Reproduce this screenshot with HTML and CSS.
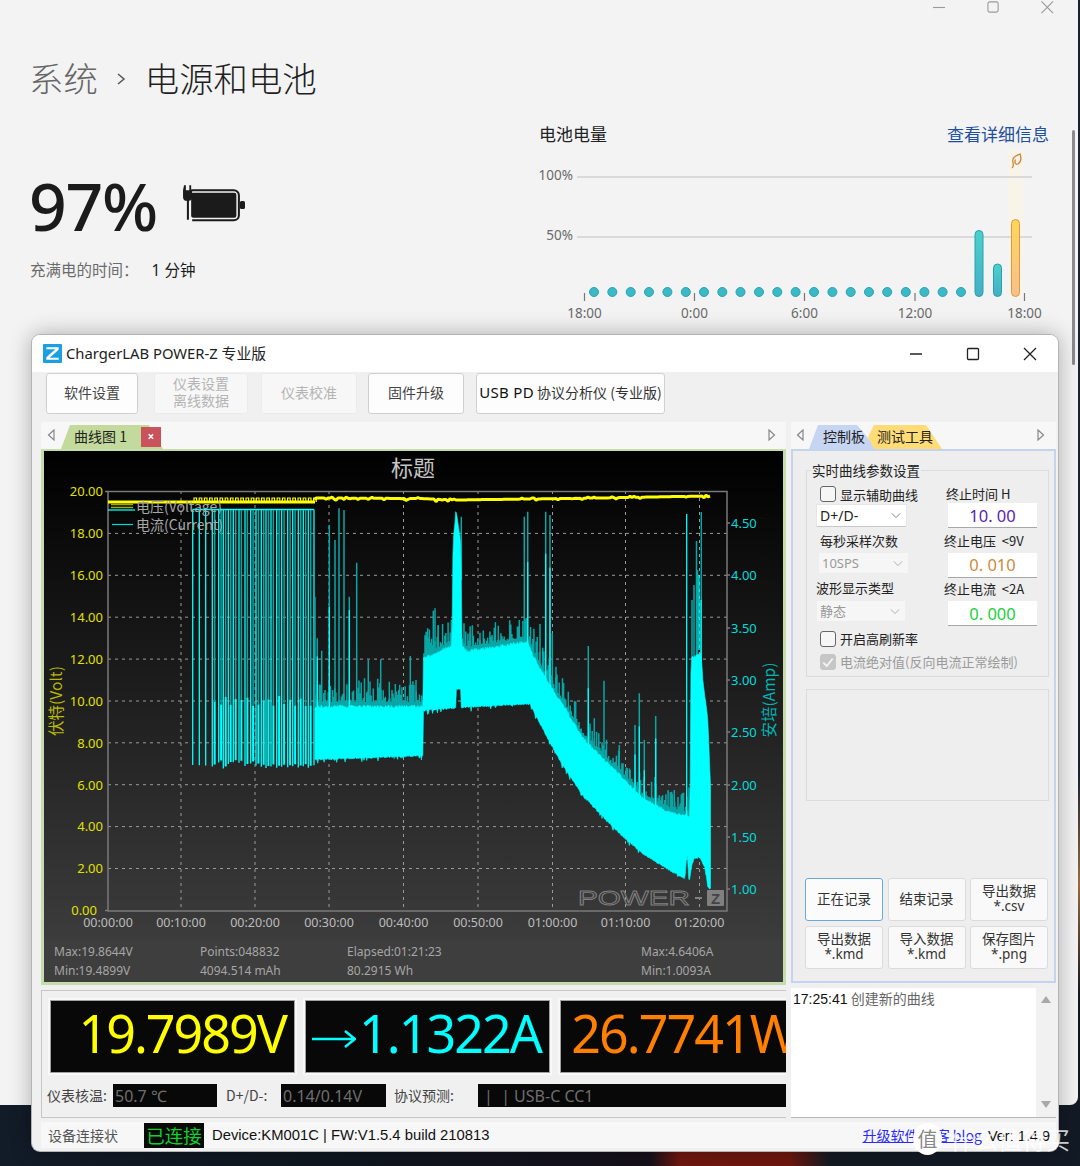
FILE: index.html
```html
<!DOCTYPE html>
<html lang="zh-CN">
<head>
<meta charset="utf-8">
<title>电源和电池</title>
<link rel="stylesheet" href="styles.css">
</head>
<body>
<div class="desktop">
  <main class="settings">
    <div class="caption">
      <svg class="cap-icon" viewBox="0 0 14 14"><path d="M0 7H13"/></svg>
      <svg class="cap-icon" viewBox="0 0 14 14"><rect x="1" y="1" width="11" height="11" rx="2"/></svg>
      <svg class="cap-icon" viewBox="0 0 14 14"><path d="M0.5 0.5L13 13M13 0.5L0.5 13"/></svg>
    </div>
    <h1 class="crumb"><span class="crumb-parent">系统</span><svg class="crumb-sep" viewBox="0 0 10 14"><path d="M2 2L8 7L2 12"/></svg><span>电源和电池</span></h1>
    <div class="power-grid">
      <section class="power-left">
        <div class="level">
          <span class="percent">97%</span>
          <svg class="batt" viewBox="0 0 64 44">
            <path class="batt-fill" d="M3 2.500h1.800v5h3.400v-5h1.800v5h1v6.500a4 4 0 0 1-3.200 3.900v18.600h-2v-18.600a4 4 0 0 1-3.800-3.900v-6.500z"/>
            <path class="batt-line" d="M10 7.500H52a5 5 0 0 1 5 5V32a5 5 0 0 1-5 5H11"/>
            <rect class="batt-fill" x="10" y="10" width="44.500" height="24.500" rx="2"/>
            <rect class="batt-fill" x="58" y="18" width="5" height="8" rx="1.500"/>
          </svg>
        </div>
        <p class="eta"><span class="eta-label">充满电的时间：</span><span>1 分钟</span></p>
      </section>
      <section class="power-right">
        <div class="chart-head"><span class="chart-title">电池电量</span><a class="chart-link">查看详细信息</a></div>
        <svg class="batt-chart" viewBox="538 148 511 177">
          <defs>
            <linearGradient id="tealBar" x1="0" y1="0" x2="0" y2="1"><stop offset="0" stop-color="#4ad2cc"/><stop offset="1" stop-color="#45aec4"/></linearGradient>
            <linearGradient id="amberBar" x1="0" y1="0" x2="0" y2="1"><stop offset="0" stop-color="#ffd558"/><stop offset="1" stop-color="#f8c08a"/></linearGradient>
          </defs>
          <rect class="bc-highlight" x="1008" y="150" width="15" height="148"/>
          <line class="bc-grid" x1="577" y1="177" x2="1032" y2="177"/>
          <line class="bc-grid" x1="577" y1="237" x2="1032" y2="237"/>
          <text class="bc-label bc-end" x="573" y="180">100%</text>
          <text class="bc-label bc-end" x="573" y="240">50%</text>
          <g class="bc-dots">
            <circle cx="594" cy="292" r="4.500"/><circle cx="612.300" cy="292" r="4.500"/><circle cx="630.700" cy="292" r="4.500"/><circle cx="649" cy="292" r="4.500"/><circle cx="667.400" cy="292" r="4.500"/><circle cx="685.800" cy="292" r="4.500"/><circle cx="704" cy="292" r="4.500"/><circle cx="722.300" cy="292" r="4.500"/><circle cx="740.500" cy="292" r="4.500"/><circle cx="759" cy="292" r="4.500"/><circle cx="777.300" cy="292" r="4.500"/><circle cx="795.600" cy="292" r="4.500"/><circle cx="814" cy="292" r="4.500"/><circle cx="832.400" cy="292" r="4.500"/><circle cx="850.700" cy="292" r="4.500"/><circle cx="869" cy="292" r="4.500"/><circle cx="887.200" cy="292" r="4.500"/><circle cx="905.800" cy="292" r="4.500"/><circle cx="924.400" cy="292" r="4.500"/><circle cx="942.600" cy="292" r="4.500"/><circle cx="961" cy="292" r="4.500"/>
          </g>
          <rect class="bc-bar-teal" x="975" y="230.500" width="8" height="66" rx="4"/>
          <rect class="bc-bar-teal" x="993.500" y="264" width="8" height="32.500" rx="4"/>
          <rect class="bc-bar-amber" x="1011.500" y="219.500" width="8" height="77" rx="4"/>
          <path class="bc-leaf" d="M1012 168C1015 166 1012 162 1013 159C1014 156 1018 155 1020 154C1021.500 158 1021 162 1018 164C1016 165 1014 163 1015.500 159.500"/>
          <path class="bc-tick" d="M584.500 293v8M694.500 293v8M804.500 293v8M915 293v8M1024.500 293v8"/>
          <text class="bc-label bc-mid" x="584.500" y="318">18:00</text>
          <text class="bc-label bc-mid" x="694.500" y="318">0:00</text>
          <text class="bc-label bc-mid" x="804.500" y="318">6:00</text>
          <text class="bc-label bc-mid" x="915" y="318">12:00</text>
          <text class="bc-label bc-mid" x="1024.500" y="318">18:00</text>
        </svg>
      </section>
    </div>
  </main>
  <div class="page-scroll"></div>

  <div class="win">
    <header class="titlebar">
      <svg class="app-logo" viewBox="0 0 20 20"><rect width="20" height="20" rx="1" class="logo-bg"/><path class="logo-z" d="M3.500 3.500H16.500V6L7 14.500H16.500V16.500H3.500V14L13 5.500H3.500Z"/></svg>
      <span class="app-title">ChargerLAB POWER-Z 专业版</span>
      <div class="win-ctrls">
        <svg class="win-ctrl" viewBox="0 0 14 14"><path d="M1 7H13"/></svg>
        <svg class="win-ctrl" viewBox="0 0 14 14"><rect x="1.500" y="1.500" width="11" height="11" rx="1"/></svg>
        <svg class="win-ctrl" viewBox="0 0 14 14"><path d="M1 1L13 13M13 1L1 13"/></svg>
      </div>
    </header>
    <nav class="toolbar">
      <button class="tbtn tb1">软件设置</button>
      <button class="tbtn tb2" disabled>仪表设置<br>离线数据</button>
      <button class="tbtn tb3" disabled>仪表校准</button>
      <button class="tbtn tb4">固件升级</button>
      <button class="tbtn tb5"><span class="lat">USB PD</span> 协议分析仪 (专业版)</button>
    </nav>
    <div class="work">
      <div class="col-left">
        <div class="tabrow">
          <svg class="arrow" viewBox="0 0 8 12"><path d="M7 1L1.500 6L7 11Z"/></svg>
          <div class="tab-green-wrap">
            <span class="tab tab-green">曲线图 1</span>
            <span class="tab-close">×</span>
          </div>
          <svg class="arrow arrow-end" viewBox="0 0 8 12"><path d="M1 1L6.500 6L1 11Z"/></svg>
        </div>
        <div class="chartbox">
          <svg class="plot" viewBox="44 451 739 489">
            <defs>
              <linearGradient id="plotBg" x1="0" y1="0" x2="0" y2="1"><stop offset="0" stop-color="#000"/><stop offset="1" stop-color="#3c3c3c"/></linearGradient>
            </defs>
            <rect x="44" y="451" width="739" height="489" fill="url(#plotBg)"/>
            <text class="p-title" x="413" y="476">标题</text>
            <path class="p-grid" d="M108 533.400H727M108 575.300H727M108 617.200H727M108 659.100H727M108 701H727M108 742.800H727M108 784.700H727M108 826.600H727M108 868.500H727M181 491V911M255 491V911M329 491V911M403.500 491V911M478 491V911M552.500 491V911M625.500 491V911M699.500 491V911"/>
            <rect class="p-axis" x="108" y="491.500" width="619" height="419.500"/>
            <path class="p-axis" d="M727 523h3M727 575h3M727 628h3M727 680h3M727 732h3M727 785h3M727 837h3M727 889h3M105 491.500h3M105 910.500h3"/>
            <g class="p-lv">
              <text x="103" y="496">20.00</text><text x="103" y="538">18.00</text><text x="103" y="580">16.00</text><text x="103" y="622">14.00</text><text x="103" y="664">12.00</text><text x="103" y="706">10.00</text><text x="103" y="748">8.00</text><text x="103" y="790">6.00</text><text x="103" y="831">4.00</text><text x="103" y="873">2.00</text><text x="97" y="915">0.00</text>
            </g>
            <g class="p-la">
              <text x="731" y="528">4.50</text><text x="731" y="580">4.00</text><text x="731" y="633">3.50</text><text x="731" y="685">3.00</text><text x="731" y="737">2.50</text><text x="731" y="790">2.00</text><text x="731" y="842">1.50</text><text x="731" y="894">1.00</text>
            </g>
            <g class="p-lx">
              <text x="108" y="927">00:00:00</text><text x="181" y="927">00:10:00</text><text x="255" y="927">00:20:00</text><text x="329" y="927">00:30:00</text><text x="403.500" y="927">00:40:00</text><text x="478" y="927">00:50:00</text><text x="552.500" y="927">01:00:00</text><text x="625.500" y="927">01:10:00</text><text x="699.500" y="927">01:20:00</text>
            </g>
            <text class="p-ylab-v" transform="translate(62 701) rotate(-90)">伏特(Volt)</text>
            <text class="p-ylab-a" transform="translate(775 700) rotate(-90)">安培(Amp)</text>
            <g id="plotData"></g>
            <path class="p-leg-v" d="M111 504.500H133M111 507.500H133"/>
            <path class="p-leg-a" d="M112 524.500H133"/>
            <text class="p-leg-t" x="136" y="512">电压(Voltage)</text>
            <text class="p-leg-t" x="136" y="530">电流(Current)</text>
            <text class="p-wm" x="578" y="905" textLength="112" lengthAdjust="spacingAndGlyphs">POWER</text>
            <path class="p-wm-dash" d="M695 898h7"/>
            <rect class="p-wm-box" x="707" y="890" width="17" height="16" rx="1"/>
            <text class="p-wm-z" x="715.500" y="904">Z</text>
          </svg>
          <div class="stats">
            <div class="stat-c"><span>Max:19.8644V</span><span>Min:19.4899V</span></div>
            <div class="stat-c"><span>Points:048832</span><span>4094.514 mAh</span></div>
            <div class="stat-c"><span>Elapsed:01:21:23</span><span>80.2915 Wh</span></div>
            <div class="stat-c"><span>Max:4.6406A</span><span>Min:1.0093A</span></div>
          </div>
        </div>
        <div class="readout">
          <div class="meters">
            <div class="meter m-v">19.7989V</div>
            <div class="meter m-a"><svg class="m-arrow" viewBox="0 0 44 20"><path d="M0 10H42M33 2L43 10L33 18"/></svg>1.1322A</div>
            <div class="meter m-w">26.7741W</div>
          </div>
          <div class="subrow">
            <span class="sub-l sl1">仪表核温:</span><span class="sub-v sv1">50.7 ℃</span>
            <span class="sub-l sl2">D+/D-:</span><span class="sub-v sv2">0.14/0.14V</span>
            <span class="sub-l sl3">协议预测:</span><span class="sub-v sv3">| &nbsp;| USB-C CC1</span>
          </div>
        </div>
      </div>
      <div class="col-right">
        <div class="tabrow tabrow-r">
          <svg class="arrow arrow-r" viewBox="0 0 8 12"><path d="M7 1L1.500 6L7 11Z"/></svg>
          <span class="tab tab-blue">控制板</span>
          <span class="tab tab-yellow">测试工具</span>
          <svg class="arrow arrow-end arrow-r2" viewBox="0 0 8 12"><path d="M1 1L6.500 6L1 11Z"/></svg>
        </div>
        <div class="panel">
          <fieldset class="group">
            <legend class="group-leg">实时曲线参数设置</legend>
            <div class="form">
              <label class="f-check ind13"><span class="cb"></span>显示辅助曲线</label>
              <span class="f-label">终止时间 H</span>
              <div class="sel ind10">D+/D-<svg class="chev" viewBox="0 0 12 8"><path d="M1 1.500L6 6.500L11 1.500"/></svg></div>
              <div class="inp c-pu">10. 00</div>
              <span class="f-label ind13 f-end">每秒采样次数</span>
              <span class="f-label f-r2 f-end">终止电压 &nbsp;&lt;9V</span>
              <div class="sel sel-dis ind12">10SPS<svg class="chev" viewBox="0 0 12 8"><path d="M1 1.500L6 6.500L11 1.500"/></svg></div>
              <div class="inp c-or">0. 010</div>
              <span class="f-label ind9 f-end f-end-hi">波形显示类型</span>
              <span class="f-label f-r2 f-end">终止电流 &nbsp;&lt;2A</span>
              <div class="sel sel-dis sel-w ind10">静态<svg class="chev" viewBox="0 0 12 8"><path d="M1 1.500L6 6.500L11 1.500"/></svg></div>
              <div class="inp c-gr">0. 000</div>
              <label class="f-check ind13 f-span"><span class="cb"></span>开启高刷新率</label>
              <label class="f-check f-dis ind13 f-span f-last"><span class="cb cb-on"><svg class="tick" viewBox="0 0 12 12"><path d="M2 6.500L5 9.500L10 3"/></svg></span>电流绝对值(反向电流正常绘制)</label>
            </div>
          </fieldset>
          <div class="emptybox"></div>
          <div class="actions">
            <button class="abtn abtn-on">正在记录</button>
            <button class="abtn">结束记录</button>
            <button class="abtn">导出数据<br><span class="lat">*.csv</span></button>
            <button class="abtn">导出数据<br><span class="lat">*.kmd</span></button>
            <button class="abtn">导入数据<br><span class="lat">*.kmd</span></button>
            <button class="abtn">保存图片<br><span class="lat">*.png</span></button>
          </div>
        </div>
        <div class="log">
          <div class="log-text"><span class="log-time">17:25:41</span> 创建新的曲线</div>
          <div class="log-bar">
            <svg class="log-arrow" viewBox="0 0 10 7"><path d="M5 0L10 7H0Z"/></svg>
            <svg class="log-arrow" viewBox="0 0 10 7"><path d="M0 0H10L5 7Z"/></svg>
          </div>
        </div>
      </div>
    </div>
    <footer class="status">
      <span class="st-label">设备连接状</span>
      <span class="st-ok">已连接</span>
      <span class="st-dev">Device:KM001C | FW:V1.5.4 build 210813</span>
      <span class="st-right"><a class="st-link">升级软件 博客 blog</a> <span class="st-ver">Ver: 1.4.9</span></span>
    </footer>
  </div>

  <div class="watermark"><span class="wm-circle">值</span><span class="wm-text">什么值得买</span></div>
</div>
<script src="chart.js"></script>
</body>
</html>
```
FILE: styles.css
```css
* { box-sizing: border-box; }
html, body { margin: 0; padding: 0; }
body { font-family: "Noto Sans", "Noto Sans CJK SC", sans-serif; }
.desktop {
  position: relative; width: 1080px; height: 1166px; overflow: hidden;
  background: linear-gradient(90deg, #121c28 0, #0e1720 300px, #15101a 650px, #701810 680px, #6e170f 790px, #141a22 830px, #121a26 1080px);
}
.settings {
  width: 1078px; height: 1105px; background: #f3f3f3; border-bottom-right-radius: 8px;
  padding-left: 30px; color: #1b1b1b;
}
.desktop::after { content: ""; position: absolute; right: 0; top: 0; width: 2px; height: 1105px; background: linear-gradient(#1a2230 0, #1a2230 70%, #9a6a3a 80%, #14181f 90%); }
.caption { height: 18px; display: flex; justify-content: flex-end; gap: 41px; padding-right: 24px; padding-top: 1px; }
.cap-icon { width: 13px; height: 13px; fill: none; stroke: #9a9a9a; stroke-width: 1.200; }
.crumb { margin: 39px 0 0 -1px; font-size: 34.400px; line-height: 44px; font-weight: 300; display: flex; align-items: center; color: #1f1f1f; }
.crumb-parent { color: #666; }
.crumb-sep { width: 10px; height: 14px; margin: 0 19px 0 18px; fill: none; stroke: #555; stroke-width: 1.500; }
.power-grid { margin-top: 19px; display: grid; grid-template-columns: 508px 511px; }
.power-left { padding-top: 35px; }
.level { height: 100px; display: flex; align-items: center; gap: 24px; }
.percent { font-size: 66px; line-height: 100px; font-weight: 500; color: #1b1b1b; letter-spacing: -1.300px; margin-left: -1px; }
.batt { width: 65px; height: 46px; margin-top: 0; }
.batt-fill { fill: #1b1b1b; }
.batt-line { fill: none; stroke: #1b1b1b; stroke-width: 2; }
.eta { margin: 5px 0 0; font-size: 15.500px; line-height: 20px; display: flex; gap: 0; }
.eta-label { color: #6b6b6b; margin-right: 13px; }
.chart-head { height: 28px; display: flex; justify-content: space-between; align-items: flex-start; padding: 2px 0 0 1px; font-size: 17px; line-height: 26px; }
.chart-title { color: #222; }
.chart-link { color: #1e4f9e; }
.batt-chart { display: block; width: 511px; height: 177px; }
.bc-highlight { fill: #f8f4ea; }
.bc-grid { stroke: #d2d2d2; stroke-width: 1.500; }
.bc-label { font-size: 13.500px; fill: #6a6a6a; font-family: "Noto Sans", sans-serif; }
.bc-end { text-anchor: end; }
.bc-mid { text-anchor: middle; }
.bc-dots circle { fill: #3cb9c6; stroke: #2ba3b0; stroke-width: 1; }
.bc-bar-teal { fill: url(#tealBar); stroke: #2b9fb0; stroke-width: 1; }
.bc-bar-amber { fill: url(#amberBar); stroke: #d99a4d; stroke-width: 1; }
.bc-leaf { fill: none; stroke: #cc8636; stroke-width: 1.300; }
.bc-tick { stroke: #777; stroke-width: 1.200; fill: none; }
.page-scroll { position: absolute; left: 1072px; top: 130px; width: 3px; height: 235px; border-radius: 2px; background: #8a8a8a; }

.win {
  position: absolute; left: 32px; top: 335px; width: 1026px; height: 816px;
  background: #f0f0f0; border-radius: 8px;
  box-shadow: 0 0 0 1px #b4b4b4, 0 0 22px rgba(0,0,0,.32); overflow: hidden;
  display: flex; flex-direction: column;
}
.titlebar { height: 37px; flex: none; background: #fff; display: flex; align-items: center; padding: 0 0 0 11px; }
.app-logo { width: 19px; height: 19px; }
.logo-bg { fill: #1a9fe2; }
.logo-z { fill: #fff; }
.app-title { margin-left: 4px; font-size: 14.800px; color: #222; padding-bottom: 2px; }
.win-ctrls { margin-left: auto; display: flex; gap: 43px; padding-right: 21px; }
.win-ctrl { width: 14px; height: 14px; fill: none; stroke: #222; stroke-width: 1.300; }
.toolbar { height: 50px; flex: none; display: flex; padding: 1px 0 0 14px; gap: 12px; }
.tbtn { height: 41px; padding: 0 0 3px; background: #fdfdfd; border: 1px solid #d0d0d0; border-radius: 3px; font: 14px/17px "Noto Sans CJK SC", sans-serif; color: #444; }
.tbtn[disabled] { background: #f7f7f7; border-color: #ececec; color: #b4b4b4; }
.tb1 { width: 92px; margin-right: 4px; }
.tb2 { width: 94px; margin-right: 1px; }
.tb3 { width: 96px; margin-right: -1px; }
.tb4 { width: 96px; }
.tb5 { width: 189px; color: #333; white-space: nowrap; }
.lat { font-family: "Noto Sans", sans-serif; }
.tb5 .lat { color: #111; font-size: 15px; letter-spacing: .3px; }
.work { display: grid; grid-template-columns: 745px 265px; column-gap: 5px; margin-left: 9px; }
.tabrow { height: 27px; background: #f7f7f7; display: flex; align-items: flex-end; position: relative; }
.arrow { width: 8px; height: 12px; fill: none; stroke: #888; stroke-width: 1.200; align-self: center; margin-left: 6px; margin-top: -2px; }
.arrow-end { margin-left: auto; margin-right: 10px; }
.tab-green-wrap { position: relative; margin-left: 6px; }
.tab { display: block; height: 24px; font-size: 14px; line-height: 23px; color: #222; font-family: "Noto Sans CJK SC", sans-serif; }
.tab-green { width: 102px; padding-left: 13px; background: #c3da9c; clip-path: polygon(0 100%, 9px 0, 88px 0, 100% 100%); }
.tab-close { position: absolute; left: 80px; top: 2px; width: 20px; height: 20px; background: #c9525c; color: #fff; font-size: 12px; line-height: 20px; text-align: center; font-weight: 700; }
.tabrow-r .arrow-r { margin-left: 5px; }
.tab-blue { width: 68px; margin-left: 5px; padding-left: 14px; background: #c5d5f2; clip-path: polygon(0 100%, 9px 0, 48px 0, 100% 100%); }
.tab-yellow { width: 74px; margin-left: -9px; padding-left: 9px; background: #ffdc75; clip-path: polygon(0 50%, 6px 0, 58px 0, 100% 100%, 6px 100%); }
.arrow-r2 { margin-right: 11px; }
.chartbox { height: 536px; border: 3px solid #c5dcab; border-top-width: 2px; border-bottom-width: 3px; display: flex; flex-direction: column; background: #3e3e3e; }
.plot { display: block; width: 739px; height: 489px; flex: none; }
.p-title { font: 22px "Noto Sans CJK SC", sans-serif; fill: #c4c4c4; text-anchor: middle; }
.p-grid { fill: none; stroke: #9a9a9a; stroke-width: 1; stroke-dasharray: 3 4; }
.p-axis { fill: none; stroke: #7a7a7a; stroke-width: 1.500; }
.p-lv text { font-size: 13px; fill: #e0e000; text-anchor: end; font-family: "Noto Sans", sans-serif; }
.p-la text { font-size: 13px; fill: #00dcdc; font-family: "Noto Sans", sans-serif; }
.p-lx text { font-size: 12.500px; fill: #bcbcbc; text-anchor: middle; font-family: "Noto Sans", sans-serif; }
.p-ylab-v, .p-ylab-a { font: 15.500px "Noto Sans CJK SC", sans-serif; text-anchor: middle; }
.p-ylab-v { fill: #b9b900; }
.p-ylab-a { fill: #00b4b4; }
.p-leg-v { stroke: #a8a800; stroke-width: 1.500; fill: none; }
.p-leg-a { stroke: #00d8d8; stroke-width: 1.200; fill: none; }
.p-leg-t { font: 14px "Noto Sans CJK SC", sans-serif; fill: #a8a8a8; }
.p-wm { font: 400 20px "Liberation Sans", sans-serif; fill: none; stroke: #808080; stroke-width: .800; }
.p-wm-dash { stroke: #808080; stroke-width: 2; }
.p-wm-box { fill: #808080; }
.p-wm-z { font: 700 15px "Liberation Sans", sans-serif; fill: #444; text-anchor: middle; }
.line-y { fill: none; stroke: #ffff00; stroke-width: 3; stroke-linejoin: bevel; }
.line-y2 { fill: none; stroke: #ffff00; stroke-width: 1.200; }
.cur { fill: none; stroke: #00ffff; stroke-width: 1.300; }
.cur-dim { fill: none; stroke: #0aa6a6; stroke-width: 1.500; }
.cur-thick { fill: none; stroke: #00ffff; stroke-width: 2; }
.band { fill: #00ffff; stroke: #00ffff; stroke-width: .600; }
.stats { height: 42px; flex: none; display: grid; grid-template-columns: 146px 147px 294px 1fr; padding: 2px 0 0 10px; background: #3e3e3e; font-size: 12px; line-height: 19px; color: #a6a6a6; }
.stat-c { display: flex; flex-direction: column; }
.readout { margin-top: 5px; height: 128px; border: 1px solid #c6c6c6; border-right: none; background: #f0f0f0; overflow: hidden; }
.meters { display: grid; grid-template-columns: 245px 245px 245px; column-gap: 10px; padding: 9px 0 0 8px; width: 800px; }
.meter { height: 73px; background: #080808; border: 1px solid #a2a2a2; box-shadow: 0 0 0 2px #f8f8f8; font-size: 52px; line-height: 63px; letter-spacing: -2px; text-align: right; padding-right: 8px; white-space: nowrap; }
.m-v { color: #ffff00; }
.m-a { color: #00ffff; }
.m-w { color: #ff8000; }
.m-arrow { width: 44px; height: 20px; margin-right: 3px; fill: none; stroke: #00ffff; stroke-width: 2.500; vertical-align: 4px; }
.subrow { margin-top: 11px; height: 23px; display: flex; align-items: center; font-size: 14px; color: #444; font-family: "Noto Sans CJK SC", sans-serif; width: 760px; }
.sub-l { line-height: 23px; flex: none; white-space: nowrap; }
.sl1 { margin-left: 5px; width: 66px; }
.sl2 { margin-left: 9px; width: 55px; }
.sl3 { margin-left: 8px; width: 84px; }
.sub-v { height: 23px; background: #080808; color: #6e6e6e; font: 16px/24px "Noto Sans", sans-serif; padding-left: 2px; }
.sv1 { width: 104px; }
.sv2 { width: 105px; }
.sv3 { flex: 1; padding-left: 6px; }
.col-right { min-width: 0; }
.panel { height: 534px; border: 2px solid #c5d3ec; background: #eeeeee; padding: 9px 0 0 13px; }
.group { margin: 0; padding: 5px 0 4px; width: 243px; height: 217px; border: 1px solid #dcdcdc; }
.group-leg { font-size: 13.500px; line-height: 20px; padding: 0 1px; margin-left: 4px; color: #222; font-family: "Noto Sans CJK SC", sans-serif; }
.form { display: grid; grid-template-columns: 139px 1fr; grid-template-rows: 18px 26px 24px 24px 24px 25px 21px 25px; font-family: "Noto Sans CJK SC", sans-serif; font-size: 13px; color: #222; }
.f-check { display: flex; align-items: center; gap: 4px; line-height: 17px; }
.f-span { grid-column: 1 / 3; align-self: end; }
.f-last { margin-bottom: 2px; }
.f-dis { color: #9a9a9a; }
.cb { width: 16px; height: 16px; border: 1px solid #666; border-radius: 3px; background: #f6f6f6; display: block; flex: none; }
.cb-on { background: #c6c6c6; border-color: #c6c6c6; }
.tick { display: block; width: 14px; height: 14px; fill: none; stroke: #f4f4f4; stroke-width: 1.500; }
.ind9 { margin-left: 9px; }
.ind10 { margin-left: 10px; }
.ind12 { margin-left: 12px; }
.ind13 { margin-left: 13px; }
.f-label { line-height: 18px; }
.f-r2 { margin-left: -2px; }
.f-end { align-self: end; margin-bottom: 3px; }
.f-end-hi { margin-bottom: 4px; }
.sel { width: 89px; height: 21px; margin-top: 2px; background: #fff; box-shadow: 0 1px 0 #c8c8c8, 0 0 0 1px #e6e6e6; padding-left: 3px; font: 14px/21px "Noto Sans", "Noto Sans CJK SC", sans-serif; color: #222; display: flex; justify-content: space-between; align-items: center; padding-right: 5px; }
.sel-dis { background: #f6f6f6; box-shadow: none; color: #999; height: 20px; margin-top: 0; font-size: 13px; }
.sel-w { width: 88px; margin-top: 0; }
.chev { width: 10px; height: 7px; fill: none; stroke: #777; stroke-width: 1.100; }
.sel-dis .chev { stroke: #aaa; }
.inp { width: 89px; height: 24px; margin-left: 2px; background: #fff; box-shadow: 0 1px 0 #a8a8a8; font: 16.500px/26px "Noto Sans", sans-serif; text-align: center; }
.c-pu { color: #5a1eb0; }
.c-or { color: #d08a3c; line-height: 23px; }
.c-gr { color: #16d23c; }
.emptybox { margin-top: 12px; width: 243px; height: 112px; border: 1px solid #dcdcdc; }
.actions { margin: 77px 0 0 -1px; display: grid; grid-template-columns: 78px 78px 78px; grid-template-rows: 43px 43px; gap: 5px 4.500px; }
.abtn { padding: 0 0 2px; background: #f9f9f9; border: 1px solid #dbdbdb; border-radius: 3px; font: 13.500px/15px "Noto Sans CJK SC", sans-serif; color: #333; }
.abtn-on { border-color: #6aa9dc; background: #fbfbfb; }
.abtn .lat { font-size: 13.500px; }
.log { margin-top: 5px; height: 130px; display: flex; background: #fff; border-bottom: 1px solid #b8b8b8; }
.log-text { flex: 1; padding: 0 0 0 2px; font-size: 14px; line-height: 20px; color: #666; font-family: "Noto Sans CJK SC", sans-serif; }
.log-time { color: #111; font-family: "Liberation Sans", sans-serif; font-size: 14px; }
.log-bar { width: 20px; background: #f1f1f1; display: flex; flex-direction: column; justify-content: space-between; align-items: center; padding: 8px 0 9px; }
.log-arrow { width: 10px; height: 7px; fill: #a8a8a8; display: block; }
.status { margin: 4px 0 0 9px; width: 1015px; height: 26px; background: #f7f7f7; display: flex; align-items: center; font-size: 14px; font-family: "Noto Sans CJK SC", sans-serif; color: #555; padding-left: 7px; }
.st-label { width: 96px; }
.st-ok { width: 60px; height: 25px; background: #0a0a0a; color: #10d030; font-size: 18.500px; line-height: 25px; text-align: center; }
.st-dev { margin-left: 8px; font: 14.800px "Liberation Sans", sans-serif; color: #111; }
.st-right { margin-left: auto; padding-right: 6px; }
.st-link { color: #2a2aff; text-decoration: underline; margin-right: 3px; }
.st-ver { color: #111; font-family: "Liberation Sans", sans-serif; font-size: 14.500px; }
.watermark { position: absolute; left: 913px; top: 1123px; display: flex; align-items: center; gap: 8px; height: 32px; }
.wm-circle { width: 29px; height: 32px; border-radius: 50%; background: #fff; color: #888; font: 20px/32px "Noto Sans CJK SC", sans-serif; text-align: center; }
.wm-text { font: 24px/32px "Noto Sans CJK SC", sans-serif; color: rgba(255,255,255,.8); }
```
FILE: chart.js
```js
(function () {
  var seed = 20210813;
  function r() { seed = (seed * 1664525 + 1013904223) % 4294967296; return seed / 4294967296; }
  function interp(pts, x) {
    if (x <= pts[0][0]) return pts[0][1];
    for (var i = 1; i < pts.length; i++) {
      if (x <= pts[i][0]) {
        var a = pts[i - 1], b = pts[i];
        if (b[0] === a[0]) return b[1];
        return a[1] + (b[1] - a[1]) * (x - a[0]) / (b[0] - a[0]);
      }
    }
    return pts[pts.length - 1][1];
  }
  var lower = [[315,759],[423,755],[423.5,710],[456,707],[456.2,688],[461,689],[461.2,707],[530,703],[537,717],[550,742],[563,765],[583,795],[600,813],[620,833],[643,853],[667,868],[685,878],[687,850],[689,882],[693,858],[700,857],[705,867],[708,887],[711,888]];
  var upper = [[315,708],[423,708],[423.5,660],[452,647],[453,547],[456,511],[461,547],[462,647],[467,653],[527,643],[533,657],[550,687],[567,713],[583,740],[600,757],[620,777],[643,800],[667,813],[683,817],[690,817],[691,660],[701,655],[703,683],[708,723],[711,800]];
  var out = [];
  var yb = 'M108 502H315', yt = '';
  for (var x = 194; x < 315; x += 5.2) { yt += 'M' + x.toFixed(1) + ' 502V498H' + (x + 2.6).toFixed(1) + 'V502'; }
  var yp = 'M315 500', yPts = [[315,498],[420,498.5],[455,500],[530,499],[600,498],[680,496.5],[711,496]];
  for (x = 316; x <= 711; x += 2) { yp += 'L' + x + ' ' + (interp(yPts, x) + (r() < 0.12 ? r() * 2.5 : 0) - (r() < 0.1 ? 1 : 0)).toFixed(1); }
  out.push('<path class="line-y" d="' + yb + '"/><path class="line-y2" d="' + yt + '"/><path class="line-y" d="' + yp + '"/>');
  out.push('<path class="cur" d="M108 510H135"/>');
  var px = [192.7,199.3,205.7,212.3,218.7,223.3,228.3,233.3,239,245,250.7,256,261.3,266,271,276.7,281.7,287.7,292.7,298.3,303.3,308.3,314];
  var bright = '', dim = '', thick = '';
  for (var i = 0; i < px.length; i++) {
    var b = 762 + r() * 7;
    bright += 'M' + px[i] + ' ' + b.toFixed(1) + 'V509.5';
    if (i > 0) bright += 'M' + px[i - 1] + ' 509.5H' + px[i];
    if (i >= 3 && i < px.length - 1) {
      var dx = px[i] + 2.4, split = 696 + r() * 10;
      dim += 'M' + dx + ' 510V' + split.toFixed(1);
      thick += 'M' + dx + ' ' + split.toFixed(1) + 'V' + (b - 2).toFixed(1);
    }
  }
  out.push('<path class="cur-dim" d="' + dim + '"/><path class="cur-thick" d="' + thick + '"/><path class="cur" d="' + bright + '"/>');
  var fringe = '', top = [], bot = [];
  for (x = 315; x <= 711; x += 0.7) {
    var u = interp(upper, x), l = interp(lower, x);
    top.push(x.toFixed(1) + ' ' + (u - r() * 3).toFixed(1));
    bot.unshift(x.toFixed(1) + ' ' + (l + (r() < 0.15 ? r() * 5 : r() * 1.5)).toFixed(1));
  }
  for (x = 315; x <= 690; x += 1.1) {
    var h = Math.pow(r(), 2.4) * 24 + 6;
    if (x > 452 && x < 462) continue;
    fringe += 'M' + x.toFixed(1) + ' ' + interp(upper, x).toFixed(1) + 'v' + (-h).toFixed(1);
  }
  out.push('<path class="cur-dim" d="' + fringe + '"/>');
  var sp = [[45,350],[52,475],[65,512],[75,630],[88,135],[105,180],[117,85],[132,90],[148,350],[170,248],[205,540],[242,538],[268,605],[331,528],[348,600],[383,445],[400,392],[405,385],[415,435],[478,205],[484,110],[492,430],[510,460],[540,458],[595,437],[630,450],[658,420],[673,110],[683,95],[720,432],[737,95],[750,105],[757,460],[768,560],[805,635],[865,498],[883,715],[912,602],[958,795],[990,870],[1005,735],[1018,640],[1033,780],[1067,708],[1115,935],[1123,930]];
  var sd = '', sb = '';
  sp.forEach(function (s) {
    var sx = 300 + s[0] / 3, sy = 480 + s[1] / 3, base = interp(upper, sx);
    sd += 'M' + sx.toFixed(1) + ' ' + base.toFixed(1) + 'V' + sy.toFixed(1);
    if (r() < 0.6 && base - sy > 60) sb += 'M' + sx.toFixed(1) + ' ' + base.toFixed(1) + 'V' + (sy + (base - sy) * (0.1 + r() * 0.4)).toFixed(1);
  });
  sd += 'M696.500 660V541M692 660V600M694 660V585M697.500 660V570M701.300 680V512';
  out.push('<path class="cur-dim" d="' + sd + '"/><path class="cur" d="' + sb + 'M686.700 860V514M701 660V600M699 650V575"/>');
  out.push('<path class="band" d="M' + top.join('L') + 'L' + bot.join('L') + 'Z"/>');
  document.getElementById('plotData').innerHTML = out.join('');
})();
```
